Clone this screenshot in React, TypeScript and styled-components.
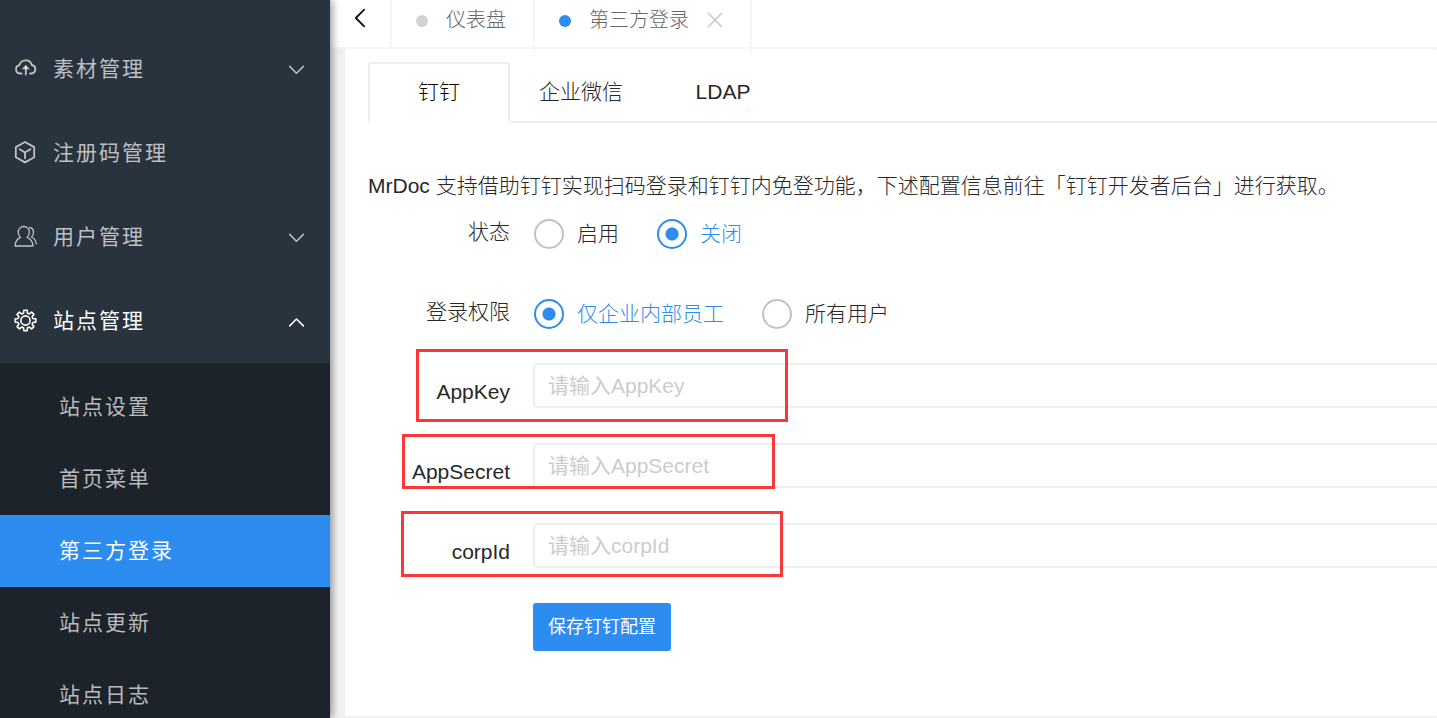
import React, { useState } from "react";
import styled, { createGlobalStyle } from "styled-components";

const sans = '"Liberation Sans", "Noto Sans CJK SC", sans-serif';
const blue = "#2d8cf0";

const GlobalStyle = createGlobalStyle`
  *, *::before, *::after { box-sizing: border-box; }
  body {
    margin: 0;
    background: #f2f2f2;
    color: #282828;
    font: 300 21px/30px ${sans};
  }
  button, input { font: inherit; }
  a { color: inherit; text-decoration: none; }
`;

const Page = styled.div`
  display: grid;
  grid-template-columns: 330px minmax(0, 1fr);
  height: 100vh;
  overflow: hidden;
`;

const Sidebar = styled.nav`
  position: relative;
  z-index: 2;
  padding-top: 27px;
  overflow: hidden;
  background: #28333e;
  box-shadow: 2px 0 8px rgba(29, 35, 41, 0.5);
  font-weight: 400;
  letter-spacing: 2px;
`;

const MenuItem = styled.a<{ $open?: boolean }>`
  display: flex;
  align-items: center;
  height: 84px;
  padding: 0 26px 0 14px;
  color: ${(p) => (p.$open ? "#fff" : "rgba(255, 255, 255, 0.7)")};

  svg { flex: none; }
  span { flex: 1; margin-left: 15px; }
`;

const SubMenu = styled.div`
  padding: 8px 0;
  background: #1c232a;
`;

const SubItem = styled.a<{ $active?: boolean }>`
  display: block;
  padding: 0 59px;
  line-height: 72px;
  background: ${(p) => (p.$active ? blue : "transparent")};
  color: ${(p) => (p.$active ? "#fff" : "rgba(255, 255, 255, 0.7)")};
`;

const Content = styled.div`
  display: flex;
  flex-direction: column;
  min-width: 0;
`;

const PageTabs = styled.header`
  position: relative;
  z-index: 1;
  display: flex;
  align-items: flex-start;
  flex: none;
  height: 49px;
  border-bottom: 2px solid #f6f6f6;
  background: #fff;
  color: #666;
  font-size: 20px;
`;

const BackButton = styled.button`
  display: flex;
  align-items: flex-start;
  justify-content: center;
  width: 60px;
  padding: 8px 0 0;
  border: 0;
  background: none;
  color: #111;
`;

const PageTab = styled.div<{ $active?: boolean }>`
  display: flex;
  align-items: flex-start;
  height: ${(p) => (p.$active ? 52 : 47)}px;
  padding: 5px 27px 0 24px;
  border-left: 2px solid #f6f6f6;
  border-right: ${(p) => (p.$active ? "2px solid #f6f6f6" : "0")};
`;

const Dot = styled.i<{ $active?: boolean }>`
  width: 12px;
  height: 12px;
  margin: 10px 18px 0 0;
  border-radius: 50%;
  background: ${(p) => (p.$active ? blue : "#d2d2d2")};
`;

const CloseButton = styled.button`
  display: flex;
  margin: 7px 0 0 18px;
  padding: 0;
  border: 0;
  background: none;
  color: #c2c2c2;
`;

const Card = styled.main`
  flex: 1;
  margin: 0 0 2px 15px;
  padding: 13px 0 0 23px;
  border-radius: 3px;
  background: #fff;
`;

const TabList = styled.div`
  display: flex;
  height: 61px;
  border-bottom: 2px solid #eee;
`;

const Tab = styled.button<{ $active?: boolean }>`
  width: 142px;
  height: 61px;
  padding: 0 0 2px;
  border: 2px solid ${(p) => (p.$active ? "#eee" : "transparent")};
  border-bottom-color: ${(p) => (p.$active ? "#fff" : "transparent")};
  border-radius: 3px 3px 0 0;
  background: none;
  color: ${(p) => (p.$active ? "#000" : "#282828")};
`;

const Intro = styled.p`
  margin: 48px 0 0;
`;

const Form = styled.form`
  display: grid;
  gap: 35px;
  margin-top: 2px;
`;

const Row = styled.div`
  position: relative;
  display: grid;
  grid-template-columns: 142px minmax(0, 1fr);
  column-gap: 23px;
  height: 45px;
`;

const Label = styled.label`
  padding-top: 14px;
  text-align: right;
`;

const RadioSet = styled.div`
  display: flex;
  gap: 38px;
  padding: 16px 0 0 1px;
`;

const RadioLabel = styled.label`
  display: flex;
  align-items: center;
  gap: 13px;
  height: 30px;

  &:has(input:checked) { color: ${blue}; }
`;

const Radio = styled.input`
  width: 30px;
  height: 30px;
  margin: 0;
  appearance: none;
  border: 2px solid #c2c2c2;
  border-radius: 50%;

  &:checked {
    border-color: ${blue};
    background: radial-gradient(circle, ${blue} 6px, transparent 7px);
  }
`;

const TextBox = styled.input`
  width: 100%;
  height: 45px;
  padding: 0 13px;
  border: 2px solid #eee;
  border-right: 0;
  border-radius: 5px 0 0 5px;
  background: #fff;
  outline: 0;
  font-weight: 400;

  &::placeholder { color: #ccc; opacity: 1; }
`;

const Highlight = styled.div<{ $left: number; $top: number; $width: number; $height: number }>`
  position: absolute;
  left: ${(p) => p.$left}px;
  top: ${(p) => p.$top}px;
  width: ${(p) => p.$width}px;
  height: ${(p) => p.$height}px;
  border: 3px solid #fb3838;
  pointer-events: none;
`;

const SaveButton = styled.button`
  justify-self: start;
  height: 48px;
  margin-left: 165px;
  padding: 0 15px;
  border: 0;
  border-radius: 3px;
  background: ${blue};
  color: #fff;
  font-size: 18px;
  font-weight: 400;
`;

const Svg = ({ size = 24, width = 1.5, children }: { size?: number; width?: number; children: React.ReactNode }) => (
  <svg width={size} height={size} viewBox="0 0 24 24" fill="none" stroke="currentColor" strokeWidth={width} strokeLinecap="round" strokeLinejoin="round" aria-hidden="true">
    {children}
  </svg>
);

const CloudIcon = () => (
  <Svg width={1.8}>
    <path d="M7.500 16.500H6a4.200 4.200 0 0 1-.6-8.300A6.400 6.400 0 0 1 17.800 8a4.300 4.300 0 0 1-.3 8.500H16" />
    <path d="M11.800 17.500v-7" />
    <path d="M11.800 7.800l4 4.400h-8z" fill="currentColor" stroke="none" />
  </Svg>
);

const CubeIcon = () => (
  <Svg width={1.8}>
    <path d="M11 1l9.200 5.100v10.200L11 21.400l-9.200-5.100V6.100z" />
    <path d="M5.600 8.300l5.400 3.200 5.400-3.200M11 11.500v5.800" />
  </Svg>
);

const UsersIcon = () => (
  <Svg width={1.3}>
    <path d="M6.600 12.400C4.900 11.100 4.200 9.100 4.200 7.100a5.600 5.600 0 0 1 11.200 0c0 2-.7 4-2.400 5.300 3.500 1.300 5.700 4 6 8.600H1c.3-4.600 2.200-7.300 5.600-8.600z" />
    <path d="M15.500 2.500c2.600.5 4 2.500 4 4.700 0 1.900-.8 3.700-2.100 4.800 2.900 1.300 4.600 3.500 4.900 6.900" />
  </Svg>
);

const gearPath = (() => {
  const points: string[] = [];
  for (let i = 0; i < 8; i++) {
    const at = (r: number, deg: number) => {
      const a = ((i * 45 + deg - 90) * Math.PI) / 180;
      return `${(11.5 + r * Math.cos(a)).toFixed(2)} ${(11.5 + r * Math.sin(a)).toFixed(2)}`;
    };
    points.push(at(7.6, -15), at(10.4, -9), at(10.4, 9), at(7.6, 15));
  }
  return `M${points.join("L")}Z`;
})();

const GearIcon = () => (
  <Svg width={1.6}>
    <path d={gearPath} />
    <circle cx="11.500" cy="11.500" r="4.600" />
  </Svg>
);

const Chevron = ({ up }: { up?: boolean }) => (
  <Svg size={15} width={2.4}>
    <path d={up ? "M1 19L12 8l11 11" : "M1 7l11 11L23 7"} />
  </Svg>
);

const fields = [
  { name: "AppKey", box: { $left: 48, $top: -14, $width: 372, $height: 73 } },
  { name: "AppSecret", box: { $left: 34, $top: -9, $width: 373, $height: 55 } },
  { name: "corpId", box: { $left: 33, $top: -12, $width: 382, $height: 66 } },
];

const RadioRow = ({ title, name, options, initial }: { title: string; name: string; options: string[]; initial: string }) => {
  const [value, setValue] = useState(initial);
  return (
    <Row role="radiogroup" aria-labelledby={`${name}-title`}>
      <Label as="span" id={`${name}-title`}>{title}</Label>
      <RadioSet>
        {options.map((option) => (
          <RadioLabel key={option}>
            <Radio type="radio" name={name} checked={value === option} onChange={() => setValue(option)} />
            {option}
          </RadioLabel>
        ))}
      </RadioSet>
    </Row>
  );
};

export default function App() {
  return (
    <>
      <GlobalStyle />
      <Page>
        <Sidebar>
          <MenuItem href="#media"><CloudIcon /><span>素材管理</span><Chevron /></MenuItem>
          <MenuItem href="#codes"><CubeIcon /><span>注册码管理</span></MenuItem>
          <MenuItem href="#users"><UsersIcon /><span>用户管理</span><Chevron /></MenuItem>
          <MenuItem href="#site" $open><GearIcon /><span>站点管理</span><Chevron up /></MenuItem>
          <SubMenu>
            {["站点设置", "首页菜单", "第三方登录", "站点更新", "站点日志"].map((item) => (
              <SubItem key={item} href={`#${item}`} $active={item === "第三方登录"}>{item}</SubItem>
            ))}
          </SubMenu>
        </Sidebar>
        <Content>
          <PageTabs>
            <BackButton aria-label="返回"><Svg size={20} width={2.2}><path d="M17 2L7 12l10 10" /></Svg></BackButton>
            <PageTab><Dot />仪表盘</PageTab>
            <PageTab $active>
              <Dot $active />第三方登录
              <CloseButton aria-label="关闭"><Svg size={16} width={2}><path d="M2 2l20 20M22 2L2 22" /></Svg></CloseButton>
            </PageTab>
          </PageTabs>
          <Card>
            <TabList role="tablist">
              <Tab role="tab" aria-selected="true" $active>钉钉</Tab>
              <Tab role="tab" aria-selected="false">企业微信</Tab>
              <Tab role="tab" aria-selected="false">LDAP</Tab>
            </TabList>
            <Intro>MrDoc 支持借助钉钉实现扫码登录和钉钉内免登功能，下述配置信息前往「钉钉开发者后台」进行获取。</Intro>
            <Form onSubmit={(e) => e.preventDefault()}>
              <RadioRow title="状态" name="status" options={["启用", "关闭"]} initial="关闭" />
              <RadioRow title="登录权限" name="scope" options={["仅企业内部员工", "所有用户"]} initial="仅企业内部员工" />
              {fields.map(({ name, box }) => (
                <Row key={name}>
                  <Label htmlFor={name}>{name}</Label>
                  <TextBox id={name} type="text" placeholder={`请输入${name}`} />
                  <Highlight {...box} />
                </Row>
              ))}
              <SaveButton type="submit">保存钉钉配置</SaveButton>
            </Form>
          </Card>
        </Content>
      </Page>
    </>
  );
}
